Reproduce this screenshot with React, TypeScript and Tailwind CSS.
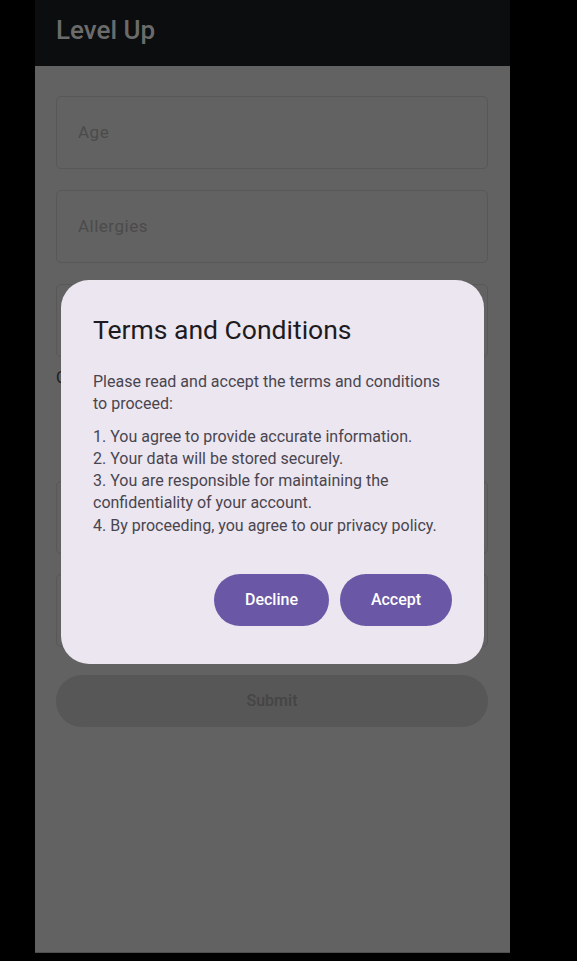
import React from 'react';

const FONT = { fontFamily: 'Roboto, "Noto Sans", sans-serif' };

function Field({ label }: { label?: string }) {
  return (
    <div className="h-[73px] rounded-[5px] border border-[#585858] flex items-center pl-[21px]">
      {label && (
        <span className="text-[17px] tracking-[0.5px] text-[#4b4b4b]">{label}</span>
      )}
    </div>
  );
}

function TermsDialog() {
  return (
    <div className="absolute left-[26px] top-[280px] w-[423px] h-[384px] rounded-[28px] bg-[#ece6f0] px-[32px] pt-[32px]">
      <h2 className="text-[26.5px] leading-[36px] text-[#1d1b20]">Terms and Conditions</h2>
      <p className="mt-[23px] text-[16px] leading-[22.3px] text-[#49454f]">
        Please read and accept the terms and conditions to proceed:
      </p>
      <p className="mt-[10px] text-[16px] leading-[22.3px] text-[#49454f]">
        1. You agree to provide accurate information.
        <br />
        2. Your data will be stored securely.
        <br />
        3. You are responsible for maintaining the confidentiality of your account.
        <br />
        4. By proceeding, you agree to our privacy policy.
      </p>
      <div className="mt-[37px] flex justify-end gap-[11px]">
        <button className="h-[52px] w-[115px] rounded-full bg-[#6a58a6] text-white text-[16px] font-medium">
          Decline
        </button>
        <button className="h-[52px] w-[112px] rounded-full bg-[#6a58a6] text-white text-[16px] font-medium">
          Accept
        </button>
      </div>
    </div>
  );
}

export default function App() {
  return (
    <div className="w-[577px] h-[961px] bg-black" style={FONT}>
      <div className="relative ml-[35px] w-[475px] h-[953px] bg-[#626262] flex flex-col border-b border-[#4e4e4e]">
        {/* App bar */}
        <div className="h-[66px] bg-[#0c0d0f] flex items-center pl-[21px] pb-[6px]">
          <span className="text-[26px] font-medium text-[#6b6b6b]">Level Up</span>
        </div>

        {/* Form, dimmed behind the dialog */}
        <div className="px-[21px] pr-[22px] pt-[30px] flex flex-col">
          <Field label="Age" />
          <div className="mt-[21px]">
            <Field label="Allergies" />
          </div>
          <div className="mt-[21px]">
            <Field />
          </div>
          <div className="h-[124px] pt-[9px]">
            <div className="w-[5px] overflow-hidden">
              <span className="text-[16px] leading-[22px] text-[#1c1c1c]">C</span>
            </div>
          </div>
          <Field />
          <div className="mt-[20px]">
            <Field />
          </div>
          <button className="mt-[28px] h-[52px] rounded-full bg-[#575757] text-[16px] font-medium text-[#454545]">
            Submit
          </button>
        </div>

        <TermsDialog />
      </div>
    </div>
  );
}
